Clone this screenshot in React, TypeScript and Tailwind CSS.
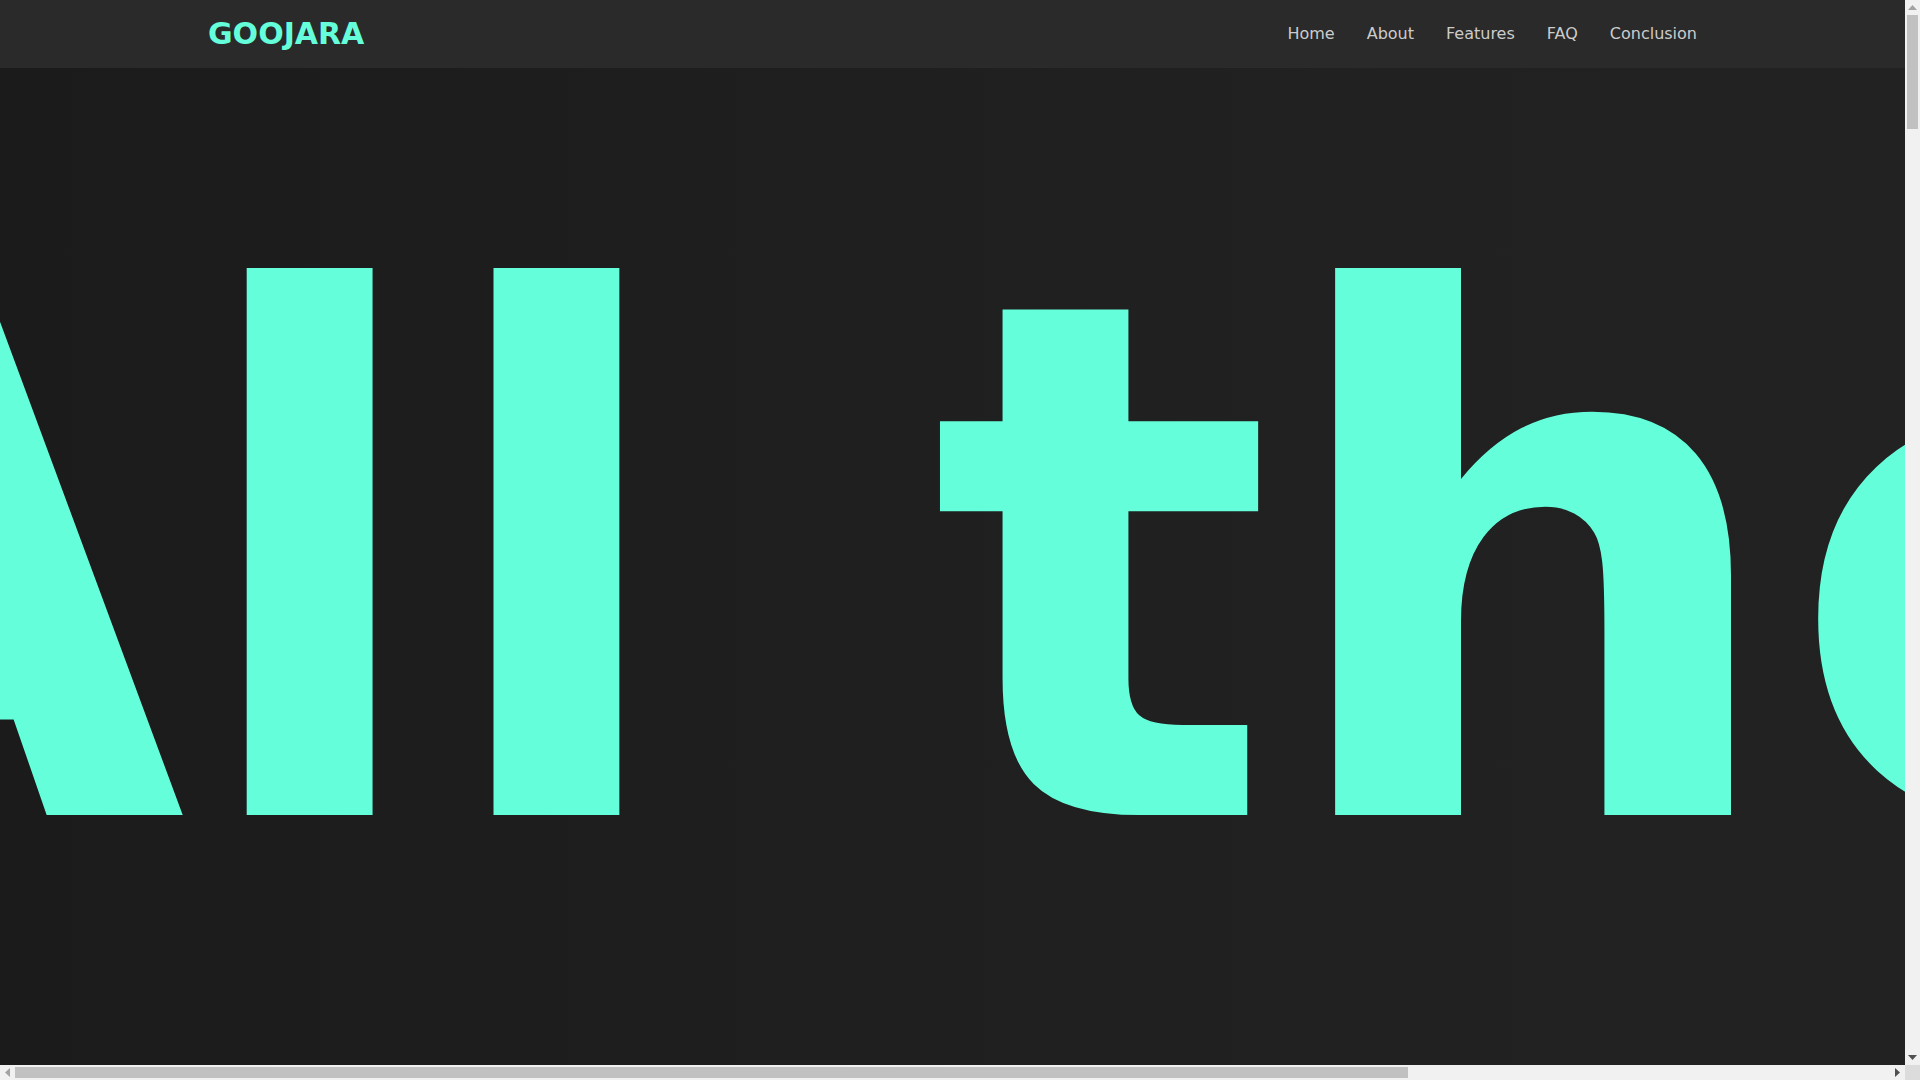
import React from "react";

const navLinks = ["Home", "About", "Features", "FAQ", "Conclusion"];

const features = [
  { title: "Huge library", text: "Thousands of movies and TV shows across every genre, updated daily." },
  { title: "No sign-up", text: "Start watching right away without creating an account." },
  { title: "HD streaming", text: "Crisp picture quality that adapts to your connection." },
  { title: "Any device", text: "Works in the browser on desktop, tablet and phone." },
];

const faqs = [
  { q: "Is Goojara free?", a: "Yes, the catalogue can be browsed and watched without a subscription." },
  { q: "Do I need an account?", a: "No account is required to start streaming." },
  { q: "Which devices are supported?", a: "Any modern browser on desktop or mobile." },
];

function Scrollbars() {
  return (
    <>
      {/* vertical */}
      <div className="fixed right-0 top-0 z-50 flex h-[1065px] w-[15px] flex-col items-center bg-[#f1f1f1]">
        <div className="flex h-[15px] w-full items-center justify-center">
          <svg width="9" height="5" viewBox="0 0 9 5">
            <path d="M0 5 L4.5 0 L9 5 Z" fill="#a3a3a3" />
          </svg>
        </div>
        <div className="h-[114px] w-[11px] bg-[#c1c1c1]" />
        <div className="flex-1" />
        <div className="flex h-[15px] w-full items-center justify-center">
          <svg width="9" height="5" viewBox="0 0 9 5">
            <path d="M0 0 L9 0 L4.5 5 Z" fill="#505050" />
          </svg>
        </div>
      </div>
      {/* horizontal */}
      <div className="fixed bottom-0 left-0 z-50 flex h-[15px] w-[1905px] items-center bg-[#f1f1f1]">
        <div className="flex h-full w-[15px] items-center justify-center">
          <svg width="5" height="9" viewBox="0 0 5 9">
            <path d="M5 0 L5 9 L0 4.5 Z" fill="#a3a3a3" />
          </svg>
        </div>
        <div className="h-[11px] w-[1393px] bg-[#c1c1c1]" />
        <div className="flex-1" />
        <div className="flex h-full w-[15px] items-center justify-center">
          <svg width="5" height="9" viewBox="0 0 5 9">
            <path d="M0 0 L5 4.5 L0 9 Z" fill="#505050" />
          </svg>
        </div>
      </div>
      <div className="fixed bottom-0 right-0 z-50 h-[15px] w-[15px] bg-[#dcdcdc]" />
    </>
  );
}

export default function App() {
  return (
    <div className="w-[1905px] bg-[#1f1f1f] font-['DejaVu_Sans',Verdana,sans-serif] text-[#cccccc]">
      <header className="h-[68px] bg-[#2a2a2a]">
        <div className="mx-auto flex h-full w-[1489px] items-center justify-between">
          <a className="text-3xl font-bold text-[#64ffda]">GOOJARA</a>
          <nav className="flex items-center gap-8 text-base text-[#cccccc]">
            {navLinks.map((l) => (
              <a key={l}>{l}</a>
            ))}
          </nav>
        </div>
      </header>

      <section className="h-[1012px] bg-[linear-gradient(90deg,#1b1b1b_0%,#1e1e1e_35%,#212121_70%,#222222_100%)] pt-[138px]">
        <h1 className="ml-[-371px] w-[2935px] overflow-hidden whitespace-nowrap text-[720px] font-bold leading-none text-[#64ffda]">
          All the movies you love
        </h1>
      </section>

      <section className="min-h-[2000px] bg-[#1f1f1f] py-32">
        <div className="mx-auto w-[1489px]">
          <h2 className="mb-8 text-5xl font-bold text-[#64ffda]">About</h2>
          <p className="max-w-3xl text-lg leading-relaxed">
            Goojara is a free streaming site with a large collection of films and series. Browse by genre, year or
            popularity and start watching in seconds.
          </p>
        </div>
      </section>

      <section className="min-h-[2600px] bg-[#222222] py-32">
        <div className="mx-auto w-[1489px]">
          <h2 className="mb-12 text-5xl font-bold text-[#64ffda]">Features</h2>
          <div className="grid grid-cols-2 gap-8">
            {features.map((f) => (
              <div key={f.title} className="rounded-lg bg-[#2a2a2a] p-8">
                <h3 className="mb-3 text-2xl font-bold text-[#64ffda]">{f.title}</h3>
                <p className="text-base leading-relaxed">{f.text}</p>
              </div>
            ))}
          </div>
        </div>
      </section>

      <section className="min-h-[2200px] bg-[#1f1f1f] py-32">
        <div className="mx-auto w-[1489px]">
          <h2 className="mb-12 text-5xl font-bold text-[#64ffda]">FAQ</h2>
          <div className="flex flex-col gap-6">
            {faqs.map((f) => (
              <div key={f.q} className="border-b border-[#333333] pb-6">
                <h3 className="mb-2 text-xl font-bold text-white">{f.q}</h3>
                <p className="text-base">{f.a}</p>
              </div>
            ))}
          </div>
        </div>
      </section>

      <section className="min-h-[1790px] bg-[#222222] py-32">
        <div className="mx-auto w-[1489px]">
          <h2 className="mb-8 text-5xl font-bold text-[#64ffda]">Conclusion</h2>
          <p className="max-w-3xl text-lg leading-relaxed">All the movies and shows you want, in one place.</p>
        </div>
      </section>

      <Scrollbars />
    </div>
  );
}
